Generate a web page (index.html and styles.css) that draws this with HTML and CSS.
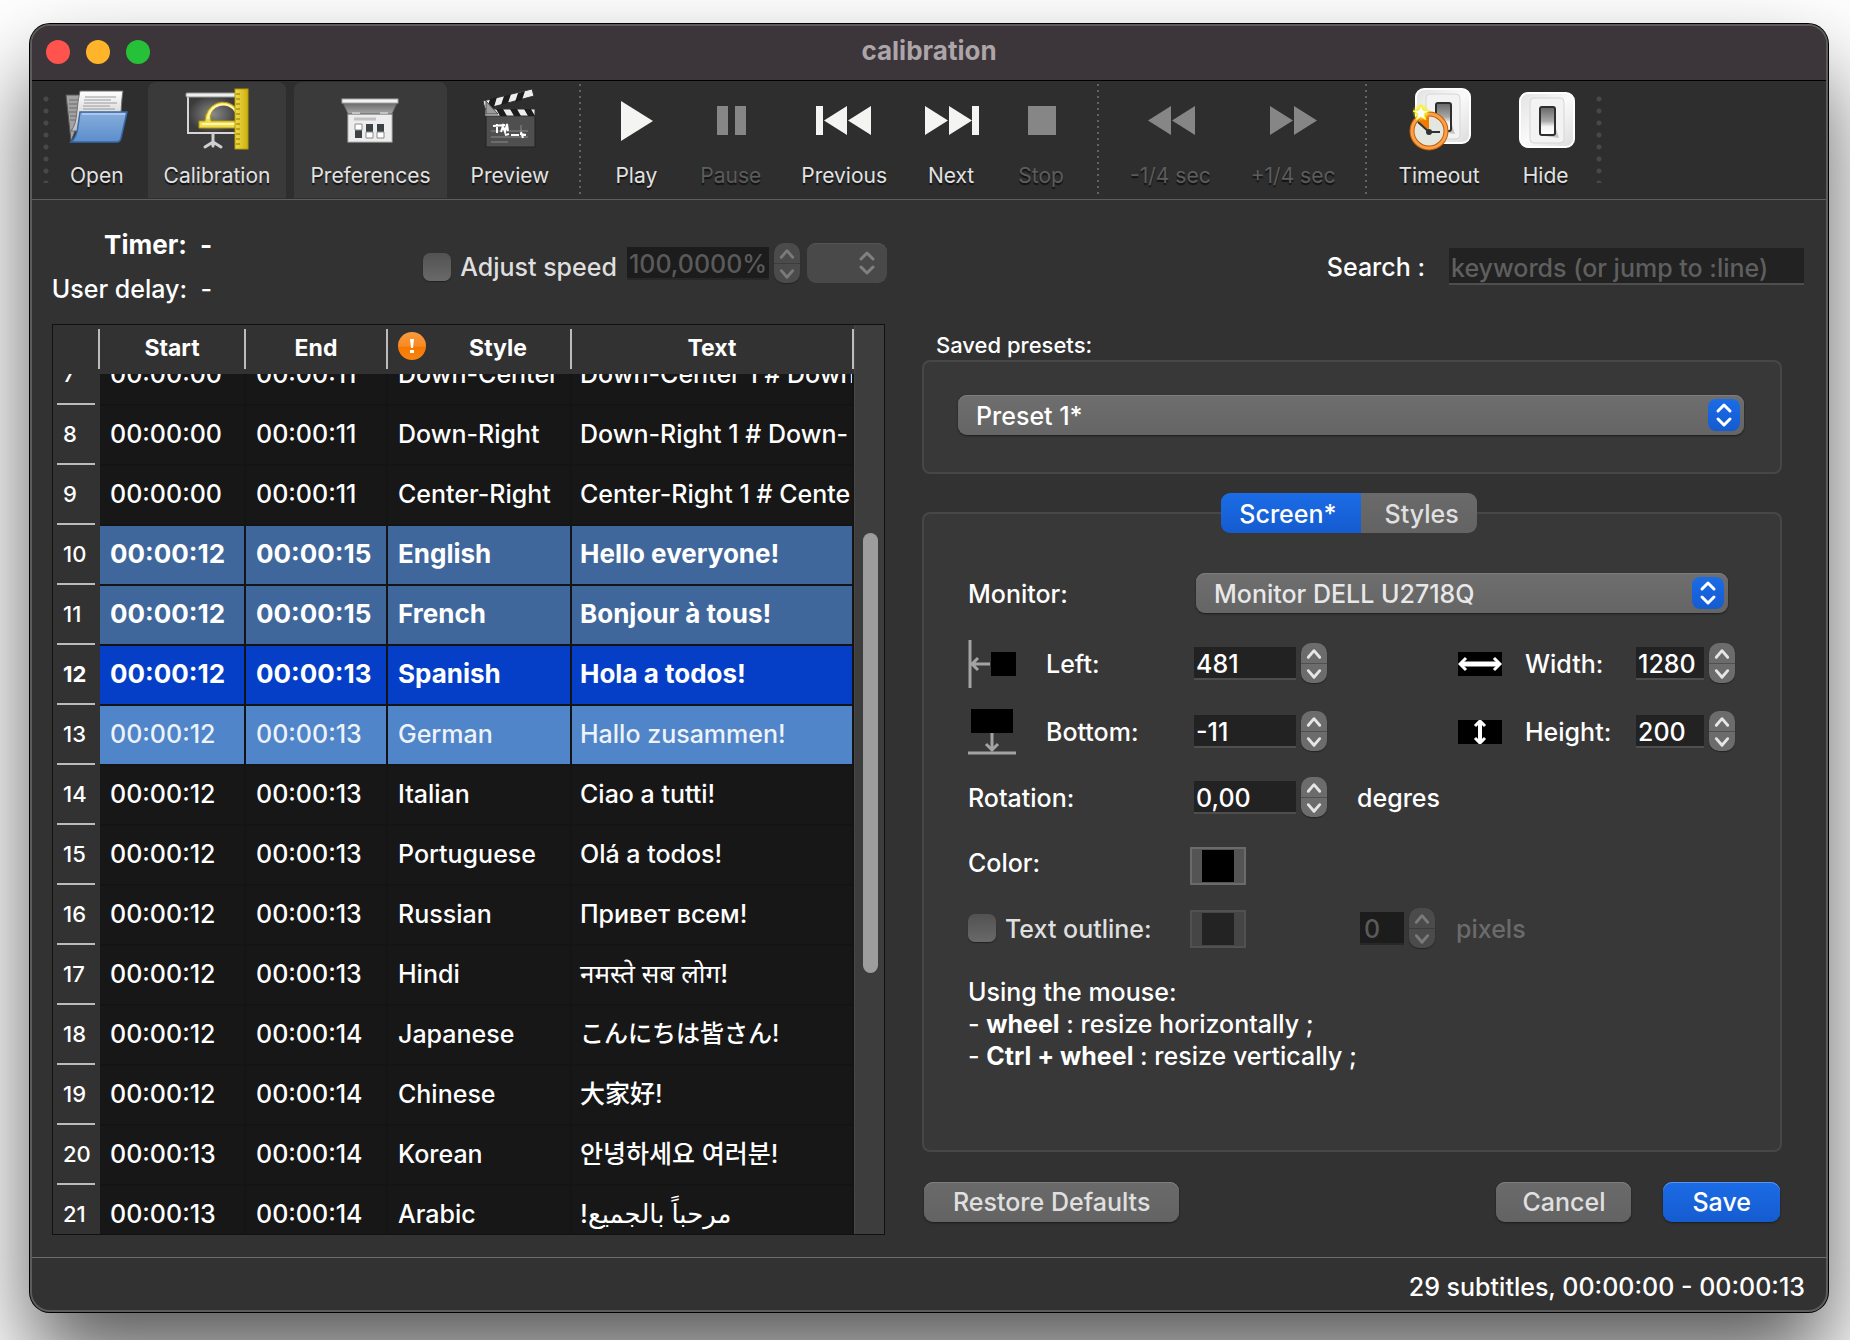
FILE: index.html
```html
<!DOCTYPE html>
<html lang="en">
<head>
<meta charset="utf-8">
<title>calibration</title>
<link rel="stylesheet" href="styles.css">
</head>
<body>
<svg class="defs" width="0" height="0" aria-hidden="true">
  <defs>
    <linearGradient id="blue" x1="0" y1="0" x2="0" y2="1"><stop offset="0" stop-color="#86aedd"/><stop offset="1" stop-color="#5b8ecb"/></linearGradient>
    <linearGradient id="paper" x1="0" y1="0" x2="0" y2="1"><stop offset="0" stop-color="#ffffff"/><stop offset="1" stop-color="#bdbdbd"/></linearGradient>
    <linearGradient id="gold" x1="0" y1="0" x2="1" y2="0"><stop offset="0" stop-color="#f2dc4a"/><stop offset="1" stop-color="#cdb010"/></linearGradient>
    <linearGradient id="plate" x1="0" y1="0" x2="1" y2="1"><stop offset="0" stop-color="#e2e2e2"/><stop offset="0.5" stop-color="#fafafa"/><stop offset="1" stop-color="#dcdcdc"/></linearGradient>
    <linearGradient id="rocker" x1="0" y1="0" x2="0" y2="1"><stop offset="0" stop-color="#666666"/><stop offset="0.5" stop-color="#a8a8a8"/><stop offset="0.7" stop-color="#f4f4f4"/><stop offset="1" stop-color="#ffffff"/></linearGradient>
    <linearGradient id="hood" x1="0" y1="0" x2="0" y2="1"><stop offset="0" stop-color="#6b6b6b"/><stop offset="1" stop-color="#a9a9a9"/></linearGradient>
    <radialGradient id="board"><stop offset="0" stop-color="#8a8a8a"/><stop offset="1" stop-color="#3b3b3b"/></radialGradient>
    <linearGradient id="warn" x1="0" y1="0" x2="0" y2="1"><stop offset="0" stop-color="#f99a3c"/><stop offset="0.5" stop-color="#f98a25"/><stop offset="0.55" stop-color="#f57900"/><stop offset="1" stop-color="#f98414"/></linearGradient>
    <radialGradient id="glow"><stop offset="0" stop-color="#ffffff"/><stop offset="0.4" stop-color="#f8f32b"/><stop offset="1" stop-color="#f8f32b" stop-opacity="0"/></radialGradient>
    <symbol id="up" viewBox="0 0 26 20"><path d="M7 14l6-7 6 7" fill="none" stroke="currentColor" stroke-width="3" stroke-linecap="round" stroke-linejoin="round"/></symbol>
    <symbol id="down" viewBox="0 0 26 20"><path d="M7 7l6 7 6-7" fill="none" stroke="currentColor" stroke-width="3" stroke-linecap="round" stroke-linejoin="round"/></symbol>
    <symbol id="updown" viewBox="0 0 32 32"><path d="M10 12l6-6 6 6M10 20l6 6 6-6" fill="none" stroke="currentColor" stroke-width="3" stroke-linecap="round" stroke-linejoin="round"/></symbol>
    <symbol id="switch" viewBox="0 0 56 56">
      <rect x="1" y="1" width="54" height="54" rx="8" fill="url(#plate)" stroke="#ffffff" stroke-width="2"/>
      <rect x="11" y="6" width="34" height="45" rx="4" fill="#f3f3f3" stroke="#d6d6d6"/>
      <path d="M36 34l4 12-14-2z" fill="#c4c4c4"/>
      <rect x="21" y="15" width="15" height="28" rx="2" fill="url(#rocker)" stroke="#2e2e2e" stroke-width="2"/>
    </symbol>
  </defs>
</svg>

<main class="window">
  <header class="titlebar">
    <div class="lights"><span class="light red"></span><span class="light yellow"></span><span class="light green"></span></div>
    <h1>calibration</h1>
  </header>

  <nav class="toolbar" aria-label="Main">
    <span class="grip"></span>
    <button class="tool" type="button">
      <svg viewBox="0 0 64 64" aria-hidden="true">
        <path d="M1 7h16v10L9 46l-3 7z" fill="#a2a2a2" stroke="#565656"/>
        <path d="M4 12h10M4 16h9M4 20h8M4 24h8M5 28h6M5 32h6" stroke="#6c6c6c"/>
        <path d="M15 3h43q-1 4-2 22L12 43H6q5-6 6-20 1-12 3-20z" fill="url(#paper)" stroke="#6f6f6f"/>
        <path d="M20 9h31M19 12h27M19 15h33M18 18h27M18 21h32" stroke="#9a9a9a"/>
        <path d="M15 24h47l-6 26q-1 4-4 4H6q6-5 7-16z" fill="url(#blue)" stroke="#3a68a8" stroke-width="1.5"/>
        <path d="M17 26h43" stroke="#b8d2f0" stroke-width="1.5"/>
      </svg>
      <span>Open</span>
    </button>
    <button class="tool on" type="button" aria-pressed="true">
      <svg viewBox="0 0 64 64" aria-hidden="true">
        <rect x="3" y="7" width="50" height="38" fill="url(#board)" stroke="#d6d6d6" stroke-width="2"/>
        <rect x="1" y="5" width="52" height="4" rx="1" fill="#eeeeee" stroke="#999999"/>
        <path d="M28 46v8M28 54l-8 5M28 54l8 5M28 54v4" stroke="#cfcfcf" stroke-width="3" stroke-linecap="round"/>
        <path fill-rule="evenodd" d="M14 33h6a18 19 0 0 1 31-13V40H14zM26 33h25V26a12 12 0 0 0-25 7z" fill="#efdc52" stroke="#b59a00"/>
        <path d="M17 36h33M23 31a15 15 0 0 1 28-7" fill="none" stroke="#fff6b0" stroke-width="2"/>
        <rect x="50" y="1" width="13" height="60" fill="url(#gold)" stroke="#b59a00"/>
        <path d="M51 6h4M51 11h4M51 16h4M51 21h4M51 26h4M51 31h4M51 36h4M51 41h4M51 46h4M51 51h4M51 56h4" stroke="#8a7400"/>
      </svg>
      <span>Calibration</span>
    </button>
    <button class="tool on" type="button" aria-pressed="true">
      <svg viewBox="0 0 64 64" aria-hidden="true">
        <rect x="10" y="22" width="44" height="32" fill="#ededed" stroke="#b5b5b5"/>
        <path d="M5 15h54l-5 11H10z" fill="url(#hood)" stroke="#5d5d5d"/>
        <path d="M14 25h8M42 25h8" stroke="#c4c4c4" stroke-width="2"/>
        <rect x="4" y="11" width="56" height="4" fill="#f3f3f3" stroke="#a5a5a5"/>
        <path d="M16 31h22" stroke="#c2c2c2" stroke-width="3"/>
        <path d="M17 36h7v14h-7zM28 36h7v14h-7zM39 36h7v14h-7z" fill="#3c4244"/>
        <path d="M17 36h7v6h-7zM28 44h7v6h-7zM39 44h7v6h-7z" fill="#ffffff" stroke="#8a8a8a"/>
      </svg>
      <span>Preferences</span>
    </button>
    <button class="tool" type="button">
      <svg viewBox="0 0 64 64" aria-hidden="true">
        <rect x="8" y="27" width="49" height="32" fill="#4f4f4f" stroke="#222222"/>
        <path d="M5 13L54 1l2 7L7 21z" fill="#eeeeee" stroke="#333333"/>
        <path d="M12 11l7-2-3 10-7 2zM26 8l7-2-3 9-7 2zM40 5l7-2-3 9-7 2z" fill="#1d1d1d"/>
        <rect x="7" y="21" width="50" height="7" fill="#eeeeee" stroke="#333333"/>
        <path d="M18 21h7l4 7h-7zM32 21h7l4 7h-7zM46 21h7l4 7h-7z" fill="#1d1d1d"/>
        <path d="M8 13l12 13H8z" fill="#9b9b9b" stroke="#4a4a4a"/>
        <path d="M13 43h37M13 49h37M13 54h17M43 37v8" stroke="#8a8a8a"/>
        <path d="M15 38l12-1M19 36v9M23 44l2-6 2 6 2-8 1 7M27 47l4-1M33 47h8M42 46l6 1M43 44l2 6" fill="none" stroke="#ffffff" stroke-width="2"/>
      </svg>
      <span>Preview</span>
    </button>
    <span class="rule"></span>
    <button class="tool" type="button">
      <svg viewBox="0 0 64 64" aria-hidden="true"><path d="M17 13l32 20-32 20z" fill="#f4f4f2"/></svg>
      <span>Play</span>
    </button>
    <button class="tool" type="button" disabled>
      <svg viewBox="0 0 64 64" aria-hidden="true"><path d="M18 18h11v29H18zM36 18h11v29H36z" fill="#868686"/></svg>
      <span>Pause</span>
    </button>
    <button class="tool" type="button">
      <svg viewBox="0 0 64 64" aria-hidden="true"><path d="M4 18h7v29H4zM35 18v29L12 32.500zM59 18v29L36 32.500z" fill="#f4f4f2"/></svg>
      <span>Previous</span>
    </button>
    <button class="tool" type="button">
      <svg viewBox="0 0 64 64" aria-hidden="true"><path d="M53 18h7v29h-7zM6 18v29l23-14.500zM30 18v29l23-14.500z" fill="#f4f4f2"/></svg>
      <span>Next</span>
    </button>
    <button class="tool roomy" type="button" disabled>
      <svg viewBox="0 0 64 64" aria-hidden="true"><path d="M19 18h28v29H19z" fill="#868686"/></svg>
      <span>Stop</span>
    </button>
    <span class="rule"></span>
    <button class="tool" type="button" disabled>
      <svg viewBox="0 0 64 64" aria-hidden="true"><path d="M33 18v29L10 32.500zM57 18v29L34 32.500z" fill="#868686"/></svg>
      <span>-1/4 sec</span>
    </button>
    <button class="tool" type="button" disabled>
      <svg viewBox="0 0 64 64" aria-hidden="true"><path d="M9 18v29l23-14.500zM33 18v29l23-14.500z" fill="#868686"/></svg>
      <span>+1/4 sec</span>
    </button>
    <span class="rule"></span>
    <button class="tool" type="button">
      <svg viewBox="0 0 64 64" aria-hidden="true">
        <use href="#switch" x="8" y="0" width="56" height="56"/>
        <circle cx="22" cy="43" r="17" fill="#e4e6e0" stroke="#c65d05" stroke-width="5"/>
        <circle cx="22" cy="43" r="17" fill="none" stroke="#f9a04a" stroke-width="3"/>
        <path d="M22 43L11 34q5-6 11-6z" fill="#f57900"/>
        <path d="M11 34l11 10h11" fill="none" stroke="#2e3436" stroke-width="2"/>
        <circle cx="22" cy="44" r="3" fill="#2e3436"/>
        <circle cx="14" cy="24" r="9" fill="url(#glow)"/>
        <path d="M14 17l2 5 6 1-5 3 2 6-5-3-5 3 2-6-5-3 6-1z" fill="#ffffff" stroke="#f5ee20"/>
      </svg>
      <span>Timeout</span>
    </button>
    <button class="tool roomy" type="button">
      <svg viewBox="0 0 64 64" aria-hidden="true"><use href="#switch" x="5" y="4" width="56" height="56"/></svg>
      <span>Hide</span>
    </button>
    <span class="grip"></span>
  </nav>

  <section class="controls">
    <dl class="timers">
      <dt class="strong">Timer:</dt><dd class="strong">-</dd>
      <dt>User delay:</dt><dd>-</dd>
    </dl>
    <div class="speed">
      <div class="option lower"><input class="check" type="checkbox" id="adjust"><label class="soft" for="adjust">Adjust speed</label></div>
      <input class="field wide" type="text" value="100,0000%" aria-label="Speed" disabled>
      <span class="stepper off"><button type="button" aria-label="Increase speed" disabled><svg><use href="#up"/></svg></button><button type="button" aria-label="Decrease speed" disabled><svg><use href="#down"/></svg></button></span>
      <span class="pick mini"><select aria-label="Speed preset" disabled><option></option></select><svg class="knob" aria-hidden="true"><use href="#updown"/></svg></span>
    </div>
    <div class="search">
      <label for="search">Search :</label>
      <input class="field" id="search" type="text" placeholder="keywords (or jump to :line)">
    </div>
  </section>

  <div class="panes">
    <section class="list">
      <div class="scroller">
        <table>
          <colgroup><col class="c-num"><col class="c-start"><col class="c-end"><col class="c-style"><col></colgroup>
          <thead>
            <tr>
              <th><span></span></th><th><span>Start</span></th><th><span>End</span></th>
              <th><span class="flagged"><svg viewBox="0 0 28 28" aria-hidden="true"><circle cx="14" cy="14" r="14" fill="url(#warn)"/><path d="M12 7h4l-1 9h-2zM12 18h4v3h-4z" fill="#ffffff"/></svg><b>Style</b></span></th>
              <th><span>Text</span></th>
            </tr>
          </thead>
          <tbody>
            <tr><th><span>7</span></th><td>00:00:00</td><td>00:00:11</td><td>Down-Center</td><td>Down-Center 1 # Down</td></tr>
            <tr><th><span>8</span></th><td>00:00:00</td><td>00:00:11</td><td>Down-Right</td><td>Down-Right 1 # Down-</td></tr>
            <tr><th><span>9</span></th><td>00:00:00</td><td>00:00:11</td><td>Center-Right</td><td>Center-Right 1 # Cente</td></tr>
            <tr class="shown"><th><span>10</span></th><td>00:00:12</td><td>00:00:15</td><td>English</td><td>Hello everyone!</td></tr>
            <tr class="shown"><th><span>11</span></th><td>00:00:12</td><td>00:00:15</td><td>French</td><td lang="fr">Bonjour à tous!</td></tr>
            <tr class="current"><th><span>12</span></th><td>00:00:12</td><td>00:00:13</td><td>Spanish</td><td lang="es">Hola a todos!</td></tr>
            <tr class="near"><th><span>13</span></th><td>00:00:12</td><td>00:00:13</td><td>German</td><td lang="de">Hallo zusammen!</td></tr>
            <tr><th><span>14</span></th><td>00:00:12</td><td>00:00:13</td><td>Italian</td><td lang="it">Ciao a tutti!</td></tr>
            <tr><th><span>15</span></th><td>00:00:12</td><td>00:00:13</td><td>Portuguese</td><td lang="pt">Olá a todos!</td></tr>
            <tr><th><span>16</span></th><td>00:00:12</td><td>00:00:13</td><td>Russian</td><td lang="ru">Привет всем!</td></tr>
            <tr><th><span>17</span></th><td>00:00:12</td><td>00:00:13</td><td>Hindi</td><td lang="hi">नमस्ते सब लोग!</td></tr>
            <tr><th><span>18</span></th><td>00:00:12</td><td>00:00:14</td><td>Japanese</td><td lang="ja">こんにちは皆さん!</td></tr>
            <tr><th><span>19</span></th><td>00:00:12</td><td>00:00:14</td><td>Chinese</td><td lang="zh-CN">大家好!</td></tr>
            <tr><th><span>20</span></th><td>00:00:13</td><td>00:00:14</td><td>Korean</td><td lang="ko">안녕하세요 여러분!</td></tr>
            <tr><th><span>21</span></th><td>00:00:13</td><td>00:00:14</td><td>Arabic</td><td lang="ar"><bdi dir="rtl">مرحباً بالجميع!</bdi></td></tr>
          </tbody>
        </table>
      </div>
      <div class="track"><span class="thumb"></span></div>
    </section>

    <section class="settings">
      <label class="small" for="preset">Saved presets:</label>
      <div class="box presets">
        <span class="pick"><select id="preset"><option>Preset 1*</option></select><svg class="knob" aria-hidden="true"><use href="#updown"/></svg></span>
      </div>

      <div class="tabs" role="tablist">
        <button type="button" role="tab" aria-selected="true">Screen*</button><button type="button" role="tab" aria-selected="false">Styles</button>
      </div>

      <div class="box screen">
        <div class="form">
          <label class="lead" for="monitor">Monitor:</label>
          <span class="pick monitor"><select id="monitor"><option>Monitor DELL U2718Q</option></select><svg class="knob" aria-hidden="true"><use href="#updown"/></svg></span>

          <svg class="hint" viewBox="0 0 48 48" aria-hidden="true"><path d="M2 0v48" stroke="#a3a3a3" stroke-width="3"/><path d="M23 12h25v24H23z"/><path d="M22 24H5M10 18l-6 6 6 6" fill="none" stroke="#a3a3a3" stroke-width="3"/></svg>
          <label for="left">Left:</label>
          <div class="spin"><input class="field" id="left" type="text" value="481"><span class="stepper"><button type="button" aria-label="Increase left"><svg><use href="#up"/></svg></button><button type="button" aria-label="Decrease left"><svg><use href="#down"/></svg></button></span></div>
          <svg class="hint short" viewBox="0 0 44 24" aria-hidden="true"><path d="M0 0h44v24H0z"/><path d="M3 12h38" stroke="#ffffff" stroke-width="5"/><path d="M8 6l-6 6 6 6M36 6l6 6-6 6" fill="none" stroke="#ffffff" stroke-width="3"/></svg>
          <label for="width">Width:</label>
          <div class="spin size"><input class="field" id="width" type="text" value="1280"><span class="stepper"><button type="button" aria-label="Increase width"><svg><use href="#up"/></svg></button><button type="button" aria-label="Decrease width"><svg><use href="#down"/></svg></button></span></div>

          <svg class="hint" viewBox="0 0 48 48" aria-hidden="true"><path d="M3 1h42v24H3z"/><path d="M0 45h48" stroke="#a3a3a3" stroke-width="3"/><path d="M24 25v18M18 36l6 6 6-6" fill="none" stroke="#a3a3a3" stroke-width="3"/></svg>
          <label for="bottom">Bottom:</label>
          <div class="spin"><input class="field" id="bottom" type="text" value="-11"><span class="stepper"><button type="button" aria-label="Increase bottom"><svg><use href="#up"/></svg></button><button type="button" aria-label="Decrease bottom"><svg><use href="#down"/></svg></button></span></div>
          <svg class="hint short" viewBox="0 0 44 24" aria-hidden="true"><path d="M0 0h44v24H0z"/><path d="M22 2v20" stroke="#ffffff" stroke-width="4"/><path d="M17 6l5-5 5 5M17 18l5 5 5-5" fill="none" stroke="#ffffff" stroke-width="3"/></svg>
          <label for="height">Height:</label>
          <div class="spin size"><input class="field" id="height" type="text" value="200"><span class="stepper"><button type="button" aria-label="Increase height"><svg><use href="#up"/></svg></button><button type="button" aria-label="Decrease height"><svg><use href="#down"/></svg></button></span></div>

          <label class="lead" for="rotation">Rotation:</label>
          <div class="spin rest"><input class="field" id="rotation" type="text" value="0,00"><span class="stepper"><button type="button" aria-label="Increase rotation"><svg><use href="#up"/></svg></button><button type="button" aria-label="Decrease rotation"><svg><use href="#down"/></svg></button></span><span class="unit">degres</span></div>

          <label class="lead raised" for="color">Color:</label>
          <div class="spin rest"><button class="swatch" id="color" type="button" aria-label="Color"><span></span></button></div>

          <div class="lead option"><input class="check" type="checkbox" id="outline"><label class="soft" for="outline">Text outline:</label></div>
          <div class="spin rest">
            <button class="swatch" type="button" aria-label="Outline color" disabled><span></span></button>
            <div class="spin outline"><input class="field" type="text" value="0" aria-label="Outline width" disabled><span class="stepper off"><button type="button" aria-label="Increase outline" disabled><svg><use href="#up"/></svg></button><button type="button" aria-label="Decrease outline" disabled><svg><use href="#down"/></svg></button></span><span class="unit dim">pixels</span></div>
          </div>
        </div>
        <p class="help">Using the mouse:<br>- <b>wheel</b> : resize horizontally ;<br>- <b>Ctrl + wheel</b> : resize vertically ;</p>
      </div>

      <div class="actions">
        <button class="push broad" type="button">Restore Defaults</button>
        <span class="right"><button class="push" type="button">Cancel</button><button class="push broad primary" type="button">Save</button></span>
      </div>
    </section>
  </div>

  <footer class="status">29 subtitles, 00:00:00 - 00:00:13</footer>
</main>
</body>
</html>
```
FILE: styles.css
```css
* { box-sizing: border-box; }

body {
  margin: 0;
  height: 100vh;
  padding: 24px 22px 28px 30px;
  overflow: hidden;
  background: #ffffff;
  color: #ffffff;
  font: 450 25px/32px Inter, "Noto Sans", "Noto Sans CJK SC", "DejaVu Sans", sans-serif;
}

button, input, select { font: inherit; color: inherit; margin: 0; }
svg { display: block; }
.defs { position: absolute; }

.window {
  display: flex;
  flex-direction: column;
  height: 100%;
  overflow: hidden;
  border: 2px solid #5c5c5c;
  border-radius: 20px;
  background: #323232;
  box-shadow: 0 0 0 1px #000000, 0 50px 90px rgba(0, 0, 0, 0.65);
}

/* Title bar */
.titlebar {
  position: relative;
  display: flex;
  align-items: center;
  justify-content: center;
  height: 55px;
  flex: none;
  padding-bottom: 4px;
  background: #3c3539;
  border-bottom: 1px solid #000000;
}
.titlebar h1 { margin: 0; font-size: 26px; font-weight: 700; color: #aca5a9; }
.lights { position: absolute; left: 14px; top: 14px; display: flex; gap: 16px; }
.light { width: 24px; height: 24px; border-radius: 50%; }
.red { background: #ff544d; }
.yellow { background: #ffb429; }
.green { background: #25c138; }

/* Toolbar */
.toolbar {
  display: flex;
  gap: 8px;
  height: 119px;
  flex: none;
  padding: 1px 11px;
  background: #2e2e2e;
  border-bottom: 1px solid #5e5e5e;
}
.tool {
  display: flex;
  flex-direction: column;
  align-items: center;
  padding: 6px 16px 0;
  border: 0;
  border-radius: 8px 8px 0 0;
  background: none;
  color: #e2e2e2;
  font-size: 21px;
  font-weight: 400;
  line-height: 28px;
  text-shadow: 0 2px 1px #111111;
  white-space: nowrap;
}
.tool svg { width: 64px; height: 64px; margin: 0 -8px 10px; }
.tool.on { background: #3a3a3a; }
.tool:disabled { color: #5c5c5c; }
.roomy { min-width: 84px; }
.rule { width: 2px; margin: 2px 7px 4px 6px; background: repeating-linear-gradient(#626262 0 2px, transparent 2px 6px); }
.grip { width: 6px; margin: 11px -3px 15px 0; background: radial-gradient(circle, #484848 2px, transparent 3px) 0 0 / 6px 12px; }

/* Timer and search */
.controls { display: flex; align-items: flex-start; height: 124px; flex: none; padding: 29px 22px 0 21px; }
.timers { display: grid; grid-template-columns: 134px auto; column-gap: 13px; row-gap: 12px; margin: 0; text-align: right; white-space: nowrap; }
.timers dt { justify-self: end; }
.timers dd { margin: 0; }
.strong { font-size: 26px; font-weight: 700; }
.speed { display: flex; align-items: center; margin: 14px 0 0 211px; }
.lower { padding-top: 7px; }
.search { display: flex; align-items: center; gap: 24px; margin: 19px 0 0 auto; }
.search .field { width: 355px; height: 37px; padding-top: 4px; }
.soft { color: #dfdfdf; }

.option, .spin { display: flex; align-items: center; }
.check { appearance: none; flex: none; width: 28px; height: 28px; border-radius: 7px; background: linear-gradient(#525252, #696969); box-shadow: 0 1px 1px #222222; }
.check + label { margin-left: 9px; }

.field {
  width: 102px;
  height: 33px;
  padding: 3px 2px 0;
  border: 0;
  border-bottom: 2px solid #4e4e4e;
  border-radius: 0;
  background: #222222;
}
.field::placeholder { color: #5f5f5f; opacity: 1; }
.field:disabled { color: #5a5a5a; background: #1c1c1c; border-color: #282828; }
.field.wide { width: 142px; margin-left: 10px; }

.stepper { display: flex; flex-direction: column; flex: none; width: 26px; height: 40px; margin-left: 5px; border-radius: 10px; overflow: hidden; background: #6c6c6c; color: #e6e6e6; box-shadow: 0 1px 1px #242424; }
.stepper button { height: 20px; padding: 0; border: 0; background: none; }
.stepper button + button { border-top: 1px solid #505050; }
.stepper svg { width: 26px; height: 19px; }
.stepper.off { background: #4b4b4b; color: #7a7a7a; }
.stepper.off button + button { border-color: #3c3c3c; }

.pick { position: relative; display: block; }
.pick select {
  appearance: none;
  display: block;
  width: 100%;
  height: 40px;
  padding: 1px 40px 0 18px;
  border: 0;
  border-radius: 9px;
  background: linear-gradient(#6e6e6e, #656565);
  box-shadow: 0 1px 2px #1c1c1c, inset 0 1px #7e7e7e;
  color: #e8e8e8;
}
.knob { position: absolute; right: 4px; top: 4px; width: 32px; height: 32px; border-radius: 8px; background: linear-gradient(#1b6ce6, #155bd0); color: #ffffff; pointer-events: none; }
.mini { width: 80px; margin-left: 7px; }
.mini select { background: #494949; box-shadow: inset 0 1px #545454; opacity: 1; }
.mini .knob { background: none; color: #808080; }

/* Two panes */
.panes { display: flex; gap: 37px; flex: 1; min-height: 0; padding: 0 44px 0 20px; }

.list { display: flex; flex: none; width: 833px; height: 911px; border: 1px solid #111111; background: #323232; }
.scroller { flex: 1; overflow: hidden; background: #171717; }
table { width: 100%; margin-top: -28px; table-layout: fixed; border-collapse: separate; border-spacing: 0; }
.c-num { width: 47px; }
.c-start { width: 146px; }
.c-end { width: 142px; }
.c-style { width: 184px; }
thead th { position: sticky; top: 0; height: 49px; padding: 4px 0 5px; background: #323232; font-size: 23px; font-weight: 700; }
thead span { display: block; height: 40px; line-height: 38px; border-right: 2px solid #bcbcbc; }
thead .flagged { display: flex; align-items: center; padding-left: 10px; }
.flagged svg { flex: none; width: 28px; height: 28px; margin-bottom: 6px; }
.flagged b { flex: 1; font-weight: 700; padding-bottom: 2px; }
tbody th { height: 60px; padding: 0 5px 0 4px; background: #323232; font-size: 22px; font-weight: 450; text-align: left; vertical-align: top; }
tbody th span { display: block; height: 59px; padding-left: 6px; line-height: 57px; border-bottom: 2px solid #bcbcbc; }
td { height: 60px; padding: 0 0 3px 10px; overflow: hidden; white-space: nowrap; border-right: 2px solid #141414; border-bottom: 2px solid #141414; text-align: left; }
td:last-child { padding-left: 8px; }
[lang="ja"] { font-family: Inter, "Noto Sans CJK JP", sans-serif; font-size: 24px; }
[lang="ko"] { font-family: Inter, "Noto Sans CJK KR", sans-serif; }
[lang="hi"], [lang="ar"] { font-size: 26px; }
.shown td, .current td { background: #40679b; font-size: 26px; font-weight: 700; }
.current td { background: #053fc8; }
.current th { font-weight: 700; }
.near td { background: #5185c9; color: #edf3fa; }

.track { width: 30px; padding: 208px 6px 0 8px; border-left: 1px solid #474747; background: #3d3d3d; }
.thumb { display: block; height: 440px; border-radius: 8px; background: #9d9d9d; }

.settings { flex: 1; min-width: 0; display: flex; flex-direction: column; }
.small { margin: 6px 0 0 14px; font-size: 22px; line-height: 30px; }
.box { border: 2px solid #474747; border-radius: 8px; background: #383838; }
.presets { height: 114px; padding: 33px 36px 0 34px; }
.presets select { color: #ffffff; }
.tabs { position: relative; display: flex; justify-content: center; margin: 19px 6px -21px 0; }
.tabs button { height: 40px; padding: 1px 18px 0 24px; border: 0; border-radius: 0 9px 9px 0; background: linear-gradient(#6a6a6a, #636363); color: #e0e0e0; }
.tabs button[aria-selected="true"] { padding: 1px 24px 0 18px; border-radius: 9px 0 0 9px; background: linear-gradient(#1b6ce6, #155bd0); color: #ffffff; }
.screen { height: 640px; padding: 44px 45px 0 44px; }
.form {
  display: grid;
  grid-template-columns: 78px 148px 1fr 67px 111px 99px;
  grid-template-rows: 70px 70px 66px 66px 70px 56px;
  align-items: center;
}
.form label { padding-top: 2px; }
.form .raised { padding: 0 0 4px; }
.lead { grid-column: 1 / 3; }
.monitor { grid-column: 3 / 7; margin: 0 7px 0 2px; }
.rest { grid-column: 3 / 7; }
.hint { width: 48px; height: 48px; margin-top: 2px; }
.hint.short { width: 44px; height: 24px; }
.size .field { width: 68px; }
.unit { margin-left: 30px; padding-top: 2px; }
.dim { color: #6b6b6b; margin-left: 21px; }
.outline { margin-left: 114px; }
.outline .field { width: 44px; padding: 3px 4px 0; }
.swatch { display: flex; justify-content: center; align-items: center; width: 56px; height: 38px; margin: 2px 0 0 -4px; padding: 0; border: 2px solid #6b6b6b; background: #545454; }
.swatch span { width: 32px; height: 32px; background: #000000; }
.swatch:disabled { border-color: #515151; background: #454545; }
.swatch:disabled span { background: #232323; }
.help { margin: 20px 0 0; }

.actions { display: flex; justify-content: space-between; padding: 30px 2px 0; }
.right { display: flex; gap: 32px; }
.push { height: 40px; padding: 0 26px; border: 0; border-radius: 9px; background: linear-gradient(#6a6a6a, #636363); box-shadow: 0 1px 2px #1c1c1c, inset 0 1px #7e7e7e; color: #e0e0e0; line-height: 36px; white-space: nowrap; }
.broad { padding: 0 29px; }
.primary { background: linear-gradient(#1b6ce6, #155bd0); box-shadow: 0 1px 2px #1c1c1c, inset 0 1px #5a94ee; color: #ffffff; }

.status { flex: none; height: 53px; padding: 13px 21px 0; border-top: 1px solid #6d6d6d; text-align: right; }
```
